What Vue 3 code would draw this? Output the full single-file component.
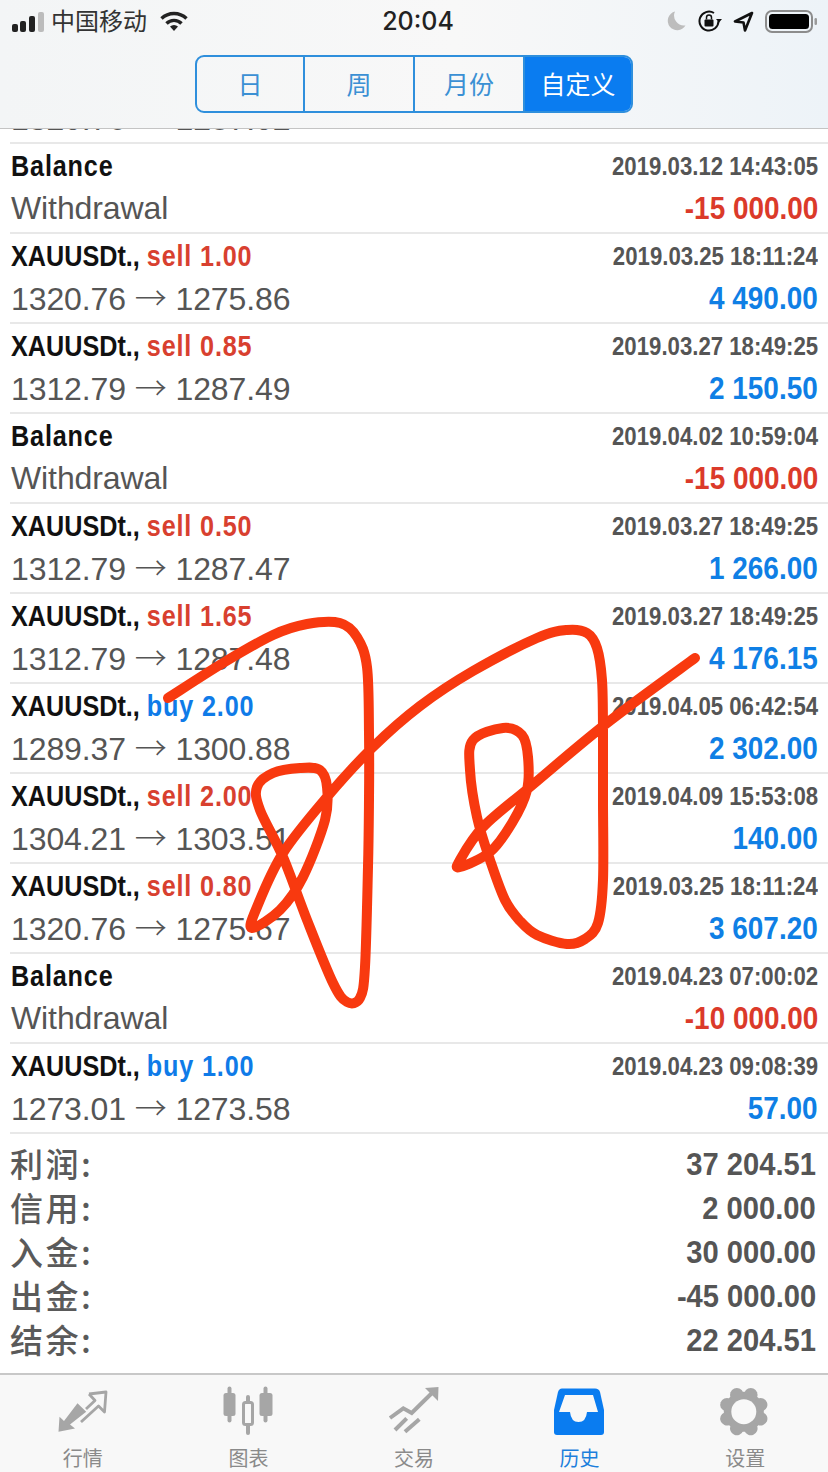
<script setup>
const rows = [
  { clip: true, from: '1320.76', to: '1287.02', amt: '656.00', up: true },
  { bal: true, date: '2019.03.12 14:43:05', amt: '-15 000.00' },
  { sym: 'XAUUSDt.,', side: 'sell', vol: '1.00', date: '2019.03.25 18:11:24', from: '1320.76', to: '1275.86', amt: '4 490.00', up: true },
  { sym: 'XAUUSDt.,', side: 'sell', vol: '0.85', date: '2019.03.27 18:49:25', from: '1312.79', to: '1287.49', amt: '2 150.50', up: true },
  { bal: true, date: '2019.04.02 10:59:04', amt: '-15 000.00' },
  { sym: 'XAUUSDt.,', side: 'sell', vol: '0.50', date: '2019.03.27 18:49:25', from: '1312.79', to: '1287.47', amt: '1 266.00', up: true },
  { sym: 'XAUUSDt.,', side: 'sell', vol: '1.65', date: '2019.03.27 18:49:25', from: '1312.79', to: '1287.48', amt: '4 176.15', up: true },
  { sym: 'XAUUSDt.,', side: 'buy', vol: '2.00', date: '2019.04.05 06:42:54', from: '1289.37', to: '1300.88', amt: '2 302.00', up: true },
  { sym: 'XAUUSDt.,', side: 'sell', vol: '2.00', date: '2019.04.09 15:53:08', from: '1304.21', to: '1303.51', amt: '140.00', up: true },
  { sym: 'XAUUSDt.,', side: 'sell', vol: '0.80', date: '2019.03.25 18:11:24', from: '1320.76', to: '1275.67', amt: '3 607.20', up: true },
  { bal: true, date: '2019.04.23 07:00:02', amt: '-10 000.00' },
  { sym: 'XAUUSDt.,', side: 'buy', vol: '1.00', date: '2019.04.23 09:08:39', from: '1273.01', to: '1273.58', amt: '57.00', up: true },
]
const summary = [
  ['利润:', '37 204.51'],
  ['信用:', '2 000.00'],
  ['入金:', '30 000.00'],
  ['出金:', '-45 000.00'],
  ['结余:', '22 204.51'],
]
const segments = ['日', '周', '月份', '自定义']
const gearAngles = [0, 45, 90, 135, 180, 225, 270, 315]

const pts = [
  [168,698],[223,663],[273,635],[307,624],[340,623],[357,637],[367,667],[369,733],[369,800],[368,867],[365,967],
  [360,998],[347,1002],[333,983],[307,920],[283,857],[260,810],[257,787],[273,773],[300,768],[320,770],
  [327,787],[325,820],[303,877],[280,910],[252,928],[257,907],[283,853],[327,797],[373,747],[420,706],
  [473,671],[537,638],[567,630],[587,633],[597,648],[602,680],[603,730],[603,800],[603,880],[598,923],[585,939],[567,944],
  [537,935],[520,921],[505,900],[490,860],[477,817],[470,770],[473,740],[503,728],[522,735],[528,757],[527,790],
  [512,823],[490,852],[460,867],[460,860],[483,827],[530,787],[607,723],[695,658],
]
function smooth(p) {
  let d = `M${p[0][0]} ${p[0][1]}`
  for (let i = 0; i < p.length - 1; i++) {
    const a = p[Math.max(i - 1, 0)], b = p[i], c = p[i + 1], e = p[Math.min(i + 2, p.length - 1)]
    const c1 = [b[0] + (c[0] - a[0]) / 6, b[1] + (c[1] - a[1]) / 6]
    const c2 = [c[0] - (e[0] - b[0]) / 6, c[1] - (e[1] - b[1]) / 6]
    d += ` C${c1[0].toFixed(1)} ${c1[1].toFixed(1)} ${c2[0].toFixed(1)} ${c2[1].toFixed(1)} ${c[0]} ${c[1]}`
  }
  return d
}
const scribble = smooth(pts)
</script>

<template>
  <div class="page">
    <header class="top">
      <div class="status">
        <div class="status-left">
          <svg class="signal" width="32" height="20" viewBox="0 0 32 20">
            <rect x="0" y="12" width="6" height="8" rx="2" fill="#222" />
            <rect x="8" y="9" width="6" height="11" rx="2" fill="#222" />
            <rect x="17" y="4" width="6" height="16" rx="2" fill="#222" />
            <rect x="26" y="0" width="6" height="20" rx="2" fill="#bcbcbc" />
          </svg>
          <span class="carrier">中国移动</span>
          <svg class="wifi" width="28" height="20" viewBox="0 0 28 20">
            <path d="M1.5 7.5A18 18 0 0 1 26.5 7.5" fill="none" stroke="#222" stroke-width="3.4" />
            <path d="M6.5 12.5A10.500 10.500 0 0 1 21.500 12.500" fill="none" stroke="#222" stroke-width="3.400" />
            <path d="M10 15.500A6 6 0 0 1 18 15.500L14 20Z" fill="#222" />
          </svg>
        </div>
        <div class="time">20:04</div>
        <div class="status-right">
          <svg width="19" height="20" viewBox="0 0 19 20">
            <path d="M8 0.500A9.500 9.500 0 1 0 18.500 14.500A10 10 0 0 1 8 0.500Z" fill="#bdbdbd" />
          </svg>
          <svg class="lock" width="25" height="22" viewBox="0 0 25 22">
            <path d="M20.500 11A9.500 9.500 0 1 1 16 3" fill="none" stroke="#111" stroke-width="2" />
            <path d="M18 9L21 12.500L24 9Z" fill="#111" />
            <rect x="6.500" y="9.500" width="9" height="7" rx="1" fill="#111" />
            <path d="M8.500 9.500V7.500A2.500 2.500 0 0 1 13.500 7.500V9.500" fill="none" stroke="#111" stroke-width="1.500" />
          </svg>
          <svg class="loc" width="21" height="21" viewBox="0 0 21 21">
            <path d="M19 2L2 10.500L10.500 11.500L12 19.500Z" fill="none" stroke="#111" stroke-width="2.600" stroke-linejoin="round" />
          </svg>
          <svg class="batt" width="53" height="23" viewBox="0 0 53 23">
            <rect x="1" y="1" width="46" height="21" rx="6" fill="none" stroke="#8c8c8c" stroke-width="2" />
            <rect x="4" y="4" width="40" height="15" rx="3.500" fill="#000" />
            <rect x="49.500" y="8" width="2.500" height="7" rx="1.200" fill="#9a9a9a" />
          </svg>
        </div>
      </div>
      <div class="segments">
        <div v-for="(s, i) in segments" :key="s" class="seg" :class="{ on: i === 3 }">{{ s }}</div>
      </div>
    </header>

    <main class="list">
      <div v-for="(r, i) in rows" :key="i" class="row">
        <div class="line">
          <span v-if="!r.clip" class="title">
            <template v-if="r.bal"><span class="bal">Balance</span></template>
            <template v-else>{{ r.sym }} <span class="side" :class="r.side">{{ r.side }} {{ r.vol }}</span></template>
          </span>
          <span v-if="!r.clip" class="date">{{ r.date }}</span>
        </div>
        <div class="line">
          <span class="price">
            <template v-if="r.bal">Withdrawal</template>
            <template v-else>{{ r.from }} <span class="arrow">→</span> {{ r.to }}</template>
          </span>
          <span class="amt" :class="r.up ? 'pos' : 'neg'">{{ r.amt }}</span>
        </div>
      </div>
      <div class="summary">
        <div v-for="s in summary" :key="s[0]" class="sum-row">
          <span class="sum-label">{{ s[0] }}</span>
          <span class="sum-val">{{ s[1] }}</span>
        </div>
      </div>
    </main>

    <nav class="tabs">
      <div class="tab">
        <svg width="60" height="50" viewBox="0 0 60 50">
          <path d="M5.500 45.700L6.500 30.700L11 35L24.500 17.300L33.200 25.700L17 38.500L22 42.500Z" fill="#a6a6a6" />
          <path d="M36 8L53 6L51.500 26L45.500 20L28 36M36 8L42 14.500L33 23" fill="none" stroke="#a6a6a6" stroke-width="2.800" stroke-linejoin="round" />
        </svg>
        <span>行情</span>
      </div>
      <div class="tab">
        <svg width="60" height="50" viewBox="0 0 60 50">
          <g fill="#a6a6a6">
            <rect x="9.500" y="0.500" width="4" height="36" rx="2" />
            <rect x="5.500" y="7" width="12" height="23" rx="2.500" />
            <rect x="28" y="9" width="4" height="40" rx="2" />
            <rect x="45.500" y="0.500" width="4" height="36" rx="2" />
            <rect x="41.500" y="7" width="13" height="23" rx="2.500" />
          </g>
          <rect x="25.500" y="16.500" width="9" height="22" rx="2" fill="#f8f8f8" stroke="#a6a6a6" stroke-width="3" />
        </svg>
        <span>图表</span>
      </div>
      <div class="tab">
        <svg width="60" height="50" viewBox="0 0 60 50">
          <g fill="none" stroke="#a6a6a6" stroke-width="4">
            <path d="M6 32L19.300 22.300L27.700 27L50 5" />
            <path d="M11 44L22.700 32.300" />
            <path d="M21 45.700L35.300 33.300" />
          </g>
          <path d="M41 2L54.500 1L54 15Z" fill="#a6a6a6" />
        </svg>
        <span>交易</span>
      </div>
      <div class="tab active">
        <svg width="60" height="50" viewBox="0 0 60 50">
          <path d="M12 2.500H45Q49 2.500 50 6L54 24V46Q54 49 51 49H7Q4 49 4 46V24L8 6Q9 2.500 12 2.500Z" fill="#0a7cf0" />
          <path d="M15 9H43L48 26H37Q36 36 28.500 36Q21 36 20 26H9Z" fill="#f8f8f8" />
        </svg>
        <span>历史</span>
      </div>
      <div class="tab">
        <svg width="60" height="50" viewBox="0 0 60 50">
          <g fill="#a6a6a6">
            <circle cx="28.800" cy="25.700" r="20" />
            <circle v-for="a in gearAngles" :key="a" cx="28.800" cy="7.500" r="6.800" :transform="`rotate(${a + 22.5} 28.800 25.700)`" />
          </g>
          <circle cx="28.800" cy="25.700" r="12.500" fill="#f8f8f8" />
        </svg>
        <span>设置</span>
      </div>
    </nav>

    <svg class="scribble" width="828" height="1472" viewBox="0 0 828 1472">
      <path :d="scribble" fill="none" stroke="#f8390f" stroke-width="10" stroke-linecap="round" stroke-linejoin="round" />
    </svg>
  </div>
</template>

<style scoped>
.page {
  position: relative;
  width: 828px;
  height: 1472px;
  overflow: hidden;
  display: flex;
  flex-direction: column;
  background: #fff;
  font-family: "Liberation Sans", "Noto Sans CJK SC", sans-serif;
}
.top {
  position: relative;
  z-index: 2;
  flex: none;
  height: 129px;
  box-sizing: border-box;
  background: linear-gradient(90deg, #f3f5f6, #f8f8f8 55%, #edf3f8);
  border-bottom: 1px solid #c4c4c4;
}
.status {
  display: grid;
  grid-template-columns: 1fr auto 1fr;
  align-items: center;
  height: 42px;
  padding: 0 10px 0 12px;
}
.status-left {
  display: flex;
  align-items: center;
}
.signal { margin-top: 1px; }
.carrier {
  margin-left: 7px;
  font-size: 24px;
  color: #333;
  transform: translateY(-2px);
}
.wifi { margin-left: 13px; }
.time {
  font-family: Inter, "Liberation Sans", sans-serif;
  font-size: 25px;
  font-weight: 500;
  color: #222;
  transform: translateX(3px);
}
.status-right {
  display: flex;
  align-items: center;
  justify-content: flex-end;
}
.lock { margin-left: 12px; }
.loc { margin-left: 10px; }
.batt { margin-left: 11px; }
.segments {
  display: flex;
  width: 438px;
  height: 58px;
  margin: 13px 0 0 195px;
  box-sizing: border-box;
  border: 2px solid #2f8fdc;
  border-radius: 9px;
  overflow: hidden;
}
.seg {
  flex: 0 0 110px;
  box-sizing: border-box;
  display: flex;
  align-items: center;
  justify-content: center;
  border-right: 2px solid #2f8fdc;
  font-size: 25px;
  color: #3b90d4;
  padding-bottom: 2px;
}
.seg:first-child { flex-basis: 108px; }
.seg.on {
  flex: 1;
  border-right: 0;
  background: #0a7cf0;
  color: #fff;
}
.list {
  flex: none;
  margin-top: -75px;
}
.row {
  height: 90px;
  box-sizing: border-box;
  margin-left: 10px;
  border-bottom: 2px solid #e8e8e8;
  padding: 1px 10px 0 1px;
}
.line {
  display: flex;
  align-items: center;
  justify-content: space-between;
  height: 42.5px;
}
.title {
  display: inline-block;
  transform: scaleX(0.84);
  transform-origin: left center;
  font-size: 30px;
  font-weight: 700;
  color: #111;
  white-space: nowrap;
}
.bal, .side { letter-spacing: 1px; }
.side.sell { color: #d8402f; }
.side.buy { color: #0f7be8; }
.date {
  display: inline-block;
  transform: scaleX(0.888);
  transform-origin: right center;
  font-size: 25px;
  font-weight: 700;
  color: #555;
  white-space: nowrap;
}
.price {
  font-size: 32px;
  color: #555;
  white-space: nowrap;
  letter-spacing: -0.1px;
}
.arrow {
  font-family: "Noto Sans CJK SC", sans-serif;
  font-weight: 300;
  line-height: 1;
}
.amt {
  display: inline-block;
  transform: scaleX(0.9);
  transform-origin: right center;
  font-size: 31px;
  font-weight: 700;
  white-space: nowrap;
}
.pos { color: #0f7fe5; }
.neg { color: #db3a2a; }
.summary {
  padding: 9px 12px 0 10px;
}
.sum-row {
  display: flex;
  align-items: center;
  justify-content: space-between;
  height: 44px;
}
.sum-label {
  font-size: 33px;
  font-weight: 500;
  color: #5a5a5a;
  letter-spacing: 2.5px;
  font-family: "Noto Sans CJK SC", sans-serif;
  margin-bottom: 4px;
}
.sum-val {
  display: inline-block;
  transform: scaleX(0.94);
  transform-origin: right center;
  font-size: 31px;
  font-weight: 700;
  color: #555;
  white-space: nowrap;
}
.tabs {
  margin-top: auto;
  flex: none;
  height: 99px;
  box-sizing: border-box;
  display: grid;
  grid-template-columns: repeat(5, 1fr);
  background: #f8f8f8;
  border-top: 2px solid #c8c8c8;
}
.tab {
  display: flex;
  flex-direction: column;
  align-items: center;
  padding-top: 11px;
  font-size: 20px;
  color: #8a8a8a;
}
.tab svg { flex: none; }
.tab span {
  line-height: 24px;
  margin-top: 11px;
}
.tab.active { color: #1c7fdc; }
.scribble {
  position: absolute;
  left: 0;
  top: 0;
  z-index: 3;
  pointer-events: none;
}
</style>
